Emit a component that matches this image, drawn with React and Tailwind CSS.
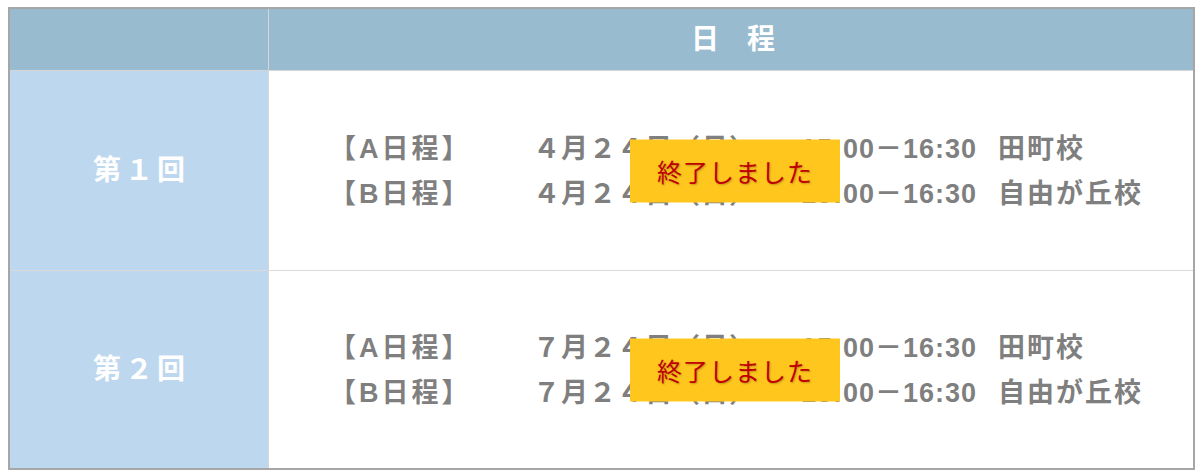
import React from "react";

const rounds = [
    {
        name: "第１回",
        lines: [
            { label: "【A日程】", date: "４月２４日（月）", time: "15:00－16:30", place: "田町校" },
            { label: "【B日程】", date: "４月２４日（日）", time: "15:00－16:30", place: "自由が丘校" },
        ],
        height: "h-[199px]",
    },
    {
        name: "第２回",
        lines: [
            { label: "【A日程】", date: "７月２４日（月）", time: "15:00－16:30", place: "田町校" },
            { label: "【B日程】", date: "７月２４日（日）", time: "15:00－16:30", place: "自由が丘校" },
        ],
        height: "h-[197px]",
    },
];

const font = "font-['Liberation_Sans','Noto_Sans_CJK_JP',sans-serif]";

const App = () => {
    return (
        <div className={`w-[1200px] h-[475px] bg-white pt-[7px] pl-[8px] ${font}`}>
            <div className="w-[1187px] border-2 border-[#a6a6a6] bg-white">
                {/* header */}
                <div className="flex h-[62px] border-b border-[#d6d6d6] bg-[#98bbcf]">
                    <div className="w-[259px] border-r border-[#d6d6d6]"></div>
                    <div className="flex-1 flex items-center justify-center text-white font-bold text-[28px] pl-[4px]">
                        日　程
                    </div>
                </div>

                {rounds.map((round, i) => (
                    <div
                        key={round.name}
                        className={`flex ${round.height} ${i === 0 ? "border-b border-[#d9d9d9] box-content" : ""}`}
                    >
                        <div className="w-[259px] bg-[#bdd7ee] border-r border-[#d6d6d6] flex items-center justify-center text-white font-bold text-[28px] tracking-[4px] pl-[4px]">
                            {round.name}
                        </div>
                        <div className="relative flex-1 flex flex-col justify-center pl-[60px] pt-[2px] text-[#7f7f7f] font-bold text-[27px] leading-[45px]">
                            {round.lines.map((line) => (
                                <div key={line.label} className="flex whitespace-nowrap">
                                    <span className="w-[204px] tracking-[3px]">{line.label}</span>
                                    <span className="w-[268px] tracking-[1px]">{line.date}</span>
                                    <span className="w-[197px] tracking-[1px]">{line.time}</span>
                                    <span className="tracking-[2px]">{line.place}</span>
                                </div>
                            ))}
                            <div className="absolute left-[361px] top-1/2 -translate-y-1/2 w-[210px] h-[63px] bg-[#ffc71e] flex items-center justify-center">
                                <span className="font-normal text-[#c00000] text-[25px] tracking-[1px] [text-shadow:1px_1px_2px_rgba(0,0,0,0.25)] font-['Noto_Sans_CJK_JP',sans-serif]">
                                    終了しました
                                </span>
                            </div>
                        </div>
                    </div>
                ))}
            </div>
        </div>
    );
};

export default App;
